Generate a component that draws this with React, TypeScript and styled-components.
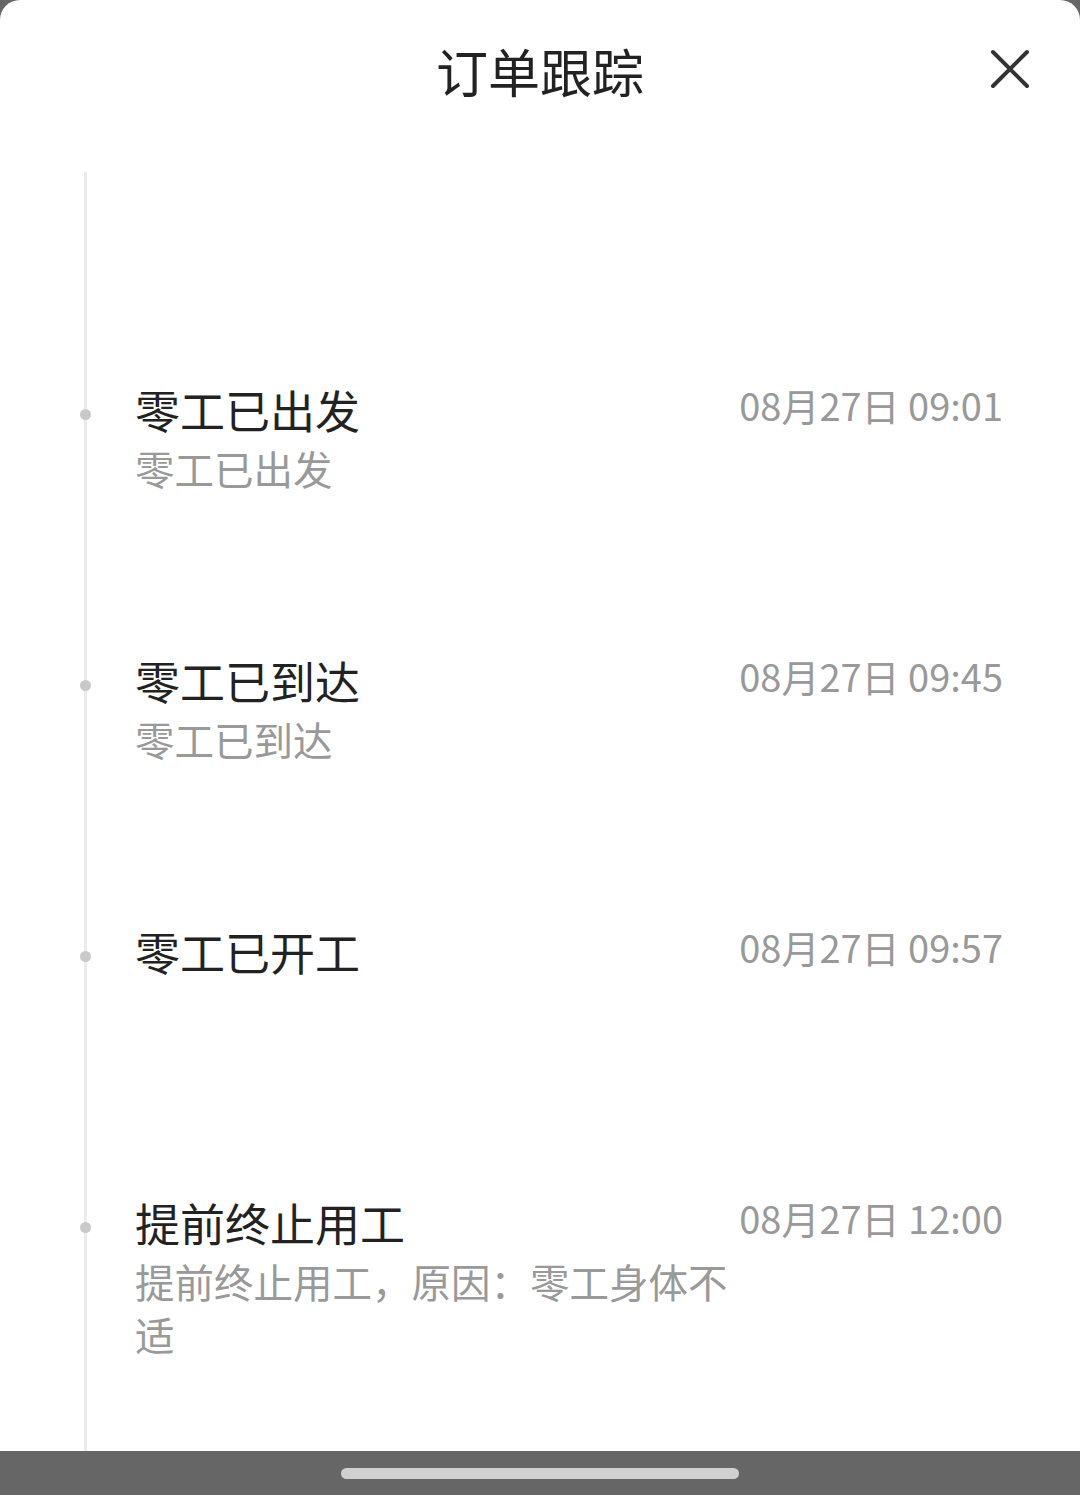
import * as React from 'react'
import styled, { createGlobalStyle } from "styled-components";

type Step = {
    title: string
    desc?: string
    time: string
}

const steps: Step[] = [
    { title: '零工已出发', desc: '零工已出发', time: '08月27日 09:01' },
    { title: '零工已到达', desc: '零工已到达', time: '08月27日 09:45' },
    { title: '零工已开工', time: '08月27日 09:57' },
    { title: '提前终止用工', desc: '提前终止用工，原因：零工身体不适', time: '08月27日 12:00' },
]

function App() {
    return (
        <Screen>
            <GlobalStyle />
            <Sheet>
                <Header>
                    <span />
                    <Title>订单跟踪</Title>
                    <Close aria-label="关闭">
                        <svg width="40" height="40" viewBox="0 0 40 40">
                            <path d="M3 3 L37 37 M37 3 L3 37" stroke="#333" strokeWidth="4" strokeLinecap="round" fill="none" />
                        </svg>
                    </Close>
                </Header>
                <Timeline>
                    {steps.map((s) => (
                        <Item key={s.time}>
                            <Dot />
                            <Content>
                                <ItemTitle>{s.title}</ItemTitle>
                                {s.desc && <ItemDesc>{s.desc}</ItemDesc>}
                            </Content>
                            <Time>{s.time}</Time>
                        </Item>
                    ))}
                </Timeline>
            </Sheet>
            <NavBar>
                <HomeIndicator />
            </NavBar>
        </Screen>
    )
}

export default App

const GlobalStyle = createGlobalStyle`
  html, body {
    margin: 0;
    padding: 0;
    background: #666666;
  }
  body {
    font-family: "Noto Sans CJK SC", "Noto Sans", sans-serif;
  }
`
const Screen = styled.div`
    width: 1080px;
    height: 1495px;
    display: flex;
    flex-direction: column;
    background: #666666;
    overflow: hidden;
`
const Sheet = styled.div`
    height: 1451px;
    flex-shrink: 0;
    display: flex;
    flex-direction: column;
    background: #fff;
    border-radius: 20px 20px 0 0;
    overflow: hidden;
`
const Header = styled.div`
    height: 148px;
    display: grid;
    grid-template-columns: 1fr auto 1fr;
    align-items: center;
    flex-shrink: 0;
`
const Title = styled.div`
    font-size: 52px;
    line-height: 60px;
    color: #222;
    margin-top: -6px;
`
const Close = styled.button`
    justify-self: end;
    align-self: start;
    margin-top: 39px;
    margin-right: 40px;
    width: 60px;
    height: 60px;
    padding: 0;
    border: none;
    background: none;
    display: flex;
    align-items: center;
    justify-content: center;
`
const Timeline = styled.div`
    flex: 1;
    min-height: 0;
    margin-top: 24px;
    margin-left: 84px;
    padding-top: 206px;
    border-left: 3px solid #ebebeb;
    display: flex;
    flex-direction: column;
`
const Item = styled.div`
    position: relative;
    height: 271px;
    flex-shrink: 0;
    display: flex;
    align-items: flex-start;
    padding-left: 48px;
    padding-right: 77px;
    box-sizing: border-box;
`
const Dot = styled.span`
    position: absolute;
    left: -7px;
    top: 31px;
    width: 11px;
    height: 11px;
    border-radius: 50%;
    background: #c9c9cc;
`
const Content = styled.div`
    width: 600px;
    display: flex;
    flex-direction: column;
`
const ItemTitle = styled.div`
    font-size: 45px;
    line-height: 63px;
    color: #222;
`
const ItemDesc = styled.div`
    font-size: 39.5px;
    line-height: 53px;
    color: #999;
`
const Time = styled.div`
    margin-left: auto;
    font-size: 38px;
    line-height: 53px;
    color: #999;
    white-space: nowrap;
`
const NavBar = styled.div`
    flex: 1;
    display: flex;
    justify-content: center;
    padding-top: 17px;
    box-sizing: border-box;
`
const HomeIndicator = styled.div`
    width: 398px;
    height: 11px;
    border-radius: 6px;
    background: #d0d0d0;
`
